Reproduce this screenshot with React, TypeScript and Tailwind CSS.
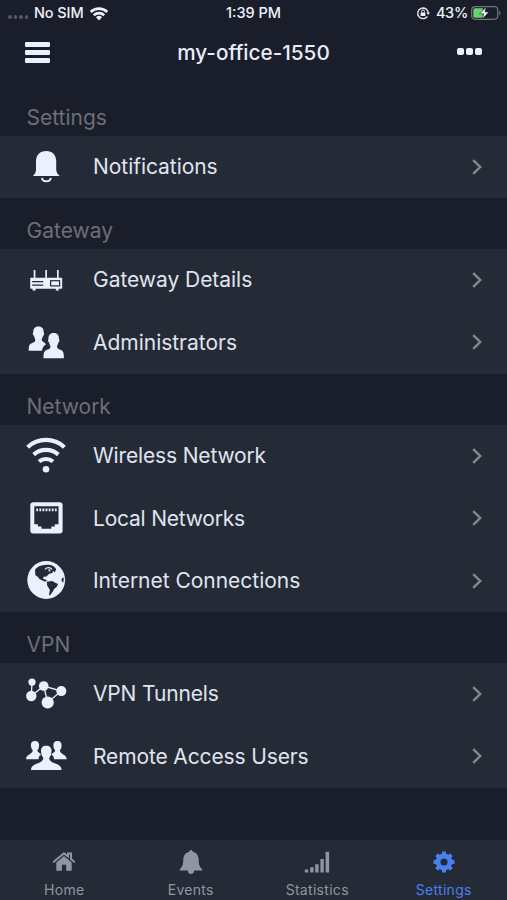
import React from "react";
import clsx from "clsx";

const NotificationsIcon = () => (
  <>
    <path d="M12 26V16.500C12 10 16 6 22.200 6s10 4 10 10.500V24c0 3 1.200 5 3.600 7H8.800c2.200-2 3.200-3.500 3.200-7z" />
    <path d="M18 32.800c.6 4.600 8 4.600 8.800 0" fill="none" stroke="currentColor" strokeWidth="2" />
  </>
);

const RouterIcon = () => (
  <>
    <path d="M9.700 11h1.700v9H9.700zM21.300 11H23v9h-1.700zM33 11h1.700v9H33zM8.600 29h3v2.400h-3zM31.800 29h3v2.400h-3z" />
    <rect x="6.200" y="18.800" width="32" height="10.900" rx="0.8" />
    <path d="M8.200 22.600h11M8.200 26.200h11" stroke="#242b36" strokeWidth="1.300" />
    <rect x="26.600" y="21.700" width="9" height="5.200" fill="none" stroke="#242b36" strokeWidth="1.200" />
  </>
);

const AdminsIcon = () => (
  <>
    <path d="M14.400 5.500c3.900 0 5.500 2.600 5.300 6 .9.400.5 2.900-.6 3.200-.3 1.800-1.400 2.900-1.400 4.300 0 1.700 3.400 2.300 4.300 4.500-2.400 1.300-3.700 3-3.900 6.300H4.700c0-4.500.2-6.300 3-7.500 2.300-1 3.600-1.500 3.600-3.300-.1-1.200-1-2.300-1.400-4.200-1.200-.4-1.500-2.700-.6-3.200-.3-3.500 1.300-6.100 5.100-6.100z" />
    <path d="M29.700 12c3.900 0 5.500 2.600 5.300 6.200.9.400.5 2.900-.6 3.200-.3 1.800-1.400 2.900-1.400 4.300 0 2 2.300 2.600 4.100 3.400 2.500 1.200 2.800 3.700 2.800 8.200H19.500c0-4.500.3-7 2.900-8.200 1.900-.8 4.100-1.400 4.100-3.400 0-1.200-1.100-2.400-1.400-4.300-1.200-.4-1.500-2.700-.6-3.200-.3-3.600 1.300-6.200 5.200-6.200z" />
  </>
);

const WirelessIcon = () => (
  <>
    <g fill="none" stroke="currentColor" strokeWidth="4.200">
      <path d="M3.600 13.200a27 27 0 0 1 36.800 0" />
      <path d="M9.700 20.600a18.500 18.500 0 0 1 24.600 0" />
      <path d="M15 27.500a11 11 0 0 1 14 0" />
    </g>
    <circle cx="22" cy="35.200" r="3.300" />
  </>
);

const EthernetIcon = () => (
  <>
    <rect x="6.300" y="5.300" width="32.300" height="31.300" rx="3" />
    <path d="M10.300 9.200h24.200v18h-3.700v2.200h-3.500v2.400h-9.800v-2.400h-3.600v-2.200h-3.600z" fill="#242b36" />
    <path d="M12.300 12.900h20.600" stroke="currentColor" strokeWidth="2.800" strokeDasharray="1.800 1.300" fill="none" />
  </>
);

const GlobeIcon = () => (
  <>
    <circle cx="22.200" cy="21" r="18.900" />
    <g fill="#242b36">
      <path d="M11 10.800c1.500-2.200 4-3.700 6.700-4.300 3.800-1 8.200-.8 11.300.4 1.500 1 2.600 2 3.200 3.300l-1.500 3.200-1.700-1.600-.6 2.300-3.200.7-2.700 2.700-2.800.2-.8 2.200 2 .4 2.600 1.800-3.100.4-4.900-2.400-1.800-2.400-2.300-1.500z" />
      <path d="M22.900 22.700l5.300-.8 3.600 2.100 2.200 1-1.400 3-2.300 1.700-1.300 2.600-2.800 4-1.300-.4 1-5-2.800-4.300z" />
      <path d="M39.400 18.300c-2 .7-2.800 4-.2 5.200.6-1.800.7-3.600.2-5.200z" />
    </g>
    <path d="M21 10.300c1.600-2.300 6-2.300 7 .3" fill="none" stroke="currentColor" strokeWidth="1.300" />
    <path d="M24.700 10.300l1.300 2" stroke="currentColor" strokeWidth="1.500" />
  </>
);

const TunnelsIcon = () => (
  <>
    <path d="M8 9.100L7.300 23l12.400-10 17.600 5-13.600 11.400-4-16.400" fill="none" stroke="currentColor" strokeWidth="1.300" />
    <circle cx="8" cy="9.100" r="3.600" />
    <circle cx="7.300" cy="23" r="5.200" />
    <circle cx="19.700" cy="13" r="4.800" />
    <circle cx="37.300" cy="18.100" r="5" />
    <circle cx="23.700" cy="29.500" r="6.100" />
  </>
);

const UsersIcon = () => (
  <>
    <path d="M11 6c3 0 4.200 1.800 4.100 4.300 0 2.700-.9 4-1.700 5 0 2.300 3.300 2.800 3.700 4.500-2 1-2.600 2.500-2.500 4.500H2c0-5 6.700-5 6.800-9-.9-1-1.800-2.300-1.900-5C6.900 7.800 8 6 11 6z" />
    <path d="M33.500 6c3 0 4.200 1.800 4.100 4.300 0 2.700-.9 4-1.700 5 0 4 6.700 4 6.800 9H30c.1-2-.7-3.500-2.600-4.500.4-1.700 3.700-2.200 3.800-4.500-.9-1-1.800-2.300-1.800-5 0-2.500 1.100-4.300 4.100-4.300z" />
    <path d="M22.200 10.700c4 0 5.500 2.300 5.300 5.600-.1 3.500-1.200 5.200-2.300 6.600 0 6.300 12.400 4.600 12.400 12.100H7c0-7.500 12.300-5.800 12.300-12.100-1.100-1.400-2.200-3.100-2.300-6.600-.2-3.300 1.300-5.600 5.200-5.600z" />
  </>
);

const sections = [
  {
    title: "Settings",
    items: [{ label: "Notifications", icon: NotificationsIcon, spacing: "tracking-[-0.05px]" }],
  },
  {
    title: "Gateway",
    items: [
      { label: "Gateway Details", icon: RouterIcon, spacing: "tracking-[-0.04px]" },
      { label: "Administrators", icon: AdminsIcon, spacing: "tracking-[-0.02px]" },
    ],
  },
  {
    title: "Network",
    items: [
      { label: "Wireless Network", icon: WirelessIcon, spacing: "tracking-[-0.15px]" },
      { label: "Local Networks", icon: EthernetIcon, spacing: "tracking-[-0.22px]" },
      { label: "Internet Connections", icon: GlobeIcon, spacing: "tracking-[-0.02px]" },
    ],
  },
  {
    title: "VPN",
    items: [
      { label: "VPN Tunnels", icon: TunnelsIcon, spacing: "tracking-[-0.14px]" },
      { label: "Remote Access Users", icon: UsersIcon, spacing: "tracking-[-0.13px]" },
    ],
  },
];

const HomeTab = () => (
  <>
    <path d="M3.200 14.200l10.800-9 4 3.300V5.400h3v5.700l3.800 3.100" fill="none" stroke="currentColor" strokeWidth="2" />
    <path d="M14 8l7.700 6.500v8.300h-5.500v-6h-4.300v6H6.300v-8.300z" />
  </>
);

const EventsTab = () => (
  <path d="M14 2c1 0 1.600.6 1.700 1.700 4 .8 5.900 3.900 6 8 .2 5 .9 7.300 3.600 9.600v1.300h-8.100c0 2-1.300 3.400-3.200 3.400s-3.200-1.400-3.200-3.400H2.700v-1.300c2.700-2.300 3.400-4.600 3.600-9.600.1-4.100 2-7.200 6-8C12.400 2.600 13 2 14 2z" />
);

const StatisticsTab = () => (
  <path d="M1.800 21.500h3.400v3H1.800zM7.200 19.300h3.400v5.200H7.200zM12.200 16.300h3.400v8.200h-3.400zM17.400 11h3.400v13.500h-3.400zM22.600 3.800h3.500v20.700h-3.500z" />
);

const SettingsTab = () => (
  <>
    <circle cx="14" cy="14" r="6" fill="none" stroke="currentColor" strokeWidth="4.800" />
    <g stroke="currentColor" strokeWidth="4">
      <path d="M14 3.500V8M14 20v4.500M3.500 14H8M20 14h4.500" />
      <path d="M6.600 6.600l3 3M18.400 18.400l3 3M21.400 6.600l-3 3M9.600 18.400l-3 3" />
    </g>
  </>
);

const tabs = [
  { label: "Home", icon: HomeTab },
  { label: "Events", icon: EventsTab },
  { label: "Statistics", icon: StatisticsTab },
  { label: "Settings", icon: SettingsTab, active: true },
];

function StatusBar() {
  return (
    <div className="grid h-[26px] grid-cols-3 items-center text-[14.500px] font-medium text-[#eef0f6]">
      <div className="flex items-center pl-2">
        <div className="mt-2 flex gap-[2px]">
          {[0, 1, 2, 3].map((i) => (
            <span key={i} className="h-[3.500px] w-[3.500px] rounded-full bg-[#555965]" />
          ))}
        </div>
        <span className="ml-[6px] tracking-[-0.1px]">No SIM</span>
        <svg viewBox="0 0 20 15" className="ml-[5px] h-[15px] w-5" fill="none" stroke="currentColor" strokeWidth="2.600">
          <path d="M1.700 6a12 12 0 0 1 16.600 0M4.800 9.200a7.600 7.600 0 0 1 10.400 0" />
          <path d="M10 14.500l-3-3.200a4.300 4.300 0 0 1 6 0z" fill="currentColor" stroke="none" />
        </svg>
      </div>
      <div className="text-center">1:39 PM</div>
      <div className="flex items-center justify-end pr-[6px]">
        <svg viewBox="0 0 14 14" className="h-[14px] w-[14px]" fill="none" stroke="currentColor">
          <path d="M11.400 10.300A5.300 5.300 0 1 1 12.300 7" strokeWidth="1.300" />
          <path d="M10.500 6.500h3.400l-1.700 2.400z" fill="currentColor" stroke="none" />
          <rect x="4.600" y="6.400" width="4.800" height="3.600" rx="0.500" fill="currentColor" stroke="none" />
          <path d="M5.600 6.500V5.300a1.400 1.400 0 0 1 2.800 0v1.200" strokeWidth="1" />
        </svg>
        <span className="ml-[6px] tracking-[-0.3px]">43%</span>
        <svg viewBox="0 0 30 14" className="ml-[3px] h-[14px] w-[30px]">
          <rect x="0.700" y="0.700" width="26" height="12.600" rx="3.500" fill="none" stroke="#71757e" strokeWidth="1.200" />
          <path d="M28.200 4.600c1.600.7 1.600 4.100 0 4.800z" fill="#71757e" />
          <path d="M4.200 2.300h7.600v9.400H4.200a1.900 1.900 0 0 1-1.900-1.900V4.200a1.900 1.900 0 0 1 1.900-1.900z" fill="#65d36e" />
          <path d="M15.400 1L8.500 7.800h4.200L11.300 13l6.600-7h-4z" fill="#fff" stroke="#1a1e2a" strokeWidth="0.600" />
        </svg>
      </div>
    </div>
  );
}

export default function App() {
  return (
    <div className="flex h-[900px] w-[507px] flex-col overflow-hidden bg-[#1a1e2a] font-['Inter',sans-serif]">
      <StatusBar />

      {/* Nav bar */}
      <header className="flex h-[53px] items-center justify-between px-[25px]">
        <button className="flex w-[49px] flex-col gap-[3.500px]" aria-label="Menu">
          <span className="h-[4.500px] w-[25px] rounded-[1px] bg-[#edf1ff]" />
          <span className="h-[4.500px] w-[25px] rounded-[1px] bg-[#edf1ff]" />
          <span className="h-[4.500px] w-[25px] rounded-[1px] bg-[#edf1ff]" />
        </button>
        <h1 className="text-[20.700px] font-medium text-[#e8ecfa]">my-office-1550</h1>
        <button className="mb-[3px] flex w-[49px] justify-end gap-[2px]" aria-label="More">
          <span className="h-[7px] w-[7px] rounded-[2px] bg-[#edf1ff]" />
          <span className="h-[7px] w-[7px] rounded-[2px] bg-[#edf1ff]" />
          <span className="h-[7px] w-[7px] rounded-[2px] bg-[#edf1ff]" />
        </button>
      </header>

      <main className="flex-1 pt-[6px]">
        {sections.map((section) => (
          <section key={section.title}>
            <h2 className="flex h-[51px] items-end pb-[3.300px] pl-[26.500px] text-[21px] leading-[30px] text-[#6c6f77]">
              {section.title}
            </h2>
            <ul className="bg-[#242b36]">
              {section.items.map(({ label, icon: Icon, spacing }) => (
                <li key={label} className="flex h-[62.400px] items-center pr-[25px] pl-6">
                  <svg viewBox="0 0 44 44" className="h-11 w-11 shrink-0 text-[#eaf0ff]" fill="currentColor">
                    <Icon />
                  </svg>
                  <span className={clsx("ml-[25px] flex-1 pb-px text-[21px] text-[#e0e4ef]", spacing)}>{label}</span>
                  <svg viewBox="0 0 10 16" className="mb-px h-4 w-[10px]" fill="none" stroke="#858991" strokeWidth="2.400">
                    <path d="M1.200 1.200L8.200 8l-7 6.800" />
                  </svg>
                </li>
              ))}
            </ul>
          </section>
        ))}
      </main>

      {/* Tab bar */}
      <nav className="grid h-[60px] grid-cols-4 bg-[#242b36] pl-px">
        {tabs.map(({ label, icon: Icon, active }) => (
          <button
            key={label}
            className={clsx("flex flex-col items-center pt-2", active ? "text-[#4a7fee]" : "text-[#9095a1]")}
          >
            <svg viewBox="0 0 28 28" className="h-7 w-7" fill="currentColor">
              <Icon />
            </svg>
            <span className="mt-1 text-[14px] leading-5 tracking-[0.3px]">{label}</span>
          </button>
        ))}
      </nav>
    </div>
  );
}
